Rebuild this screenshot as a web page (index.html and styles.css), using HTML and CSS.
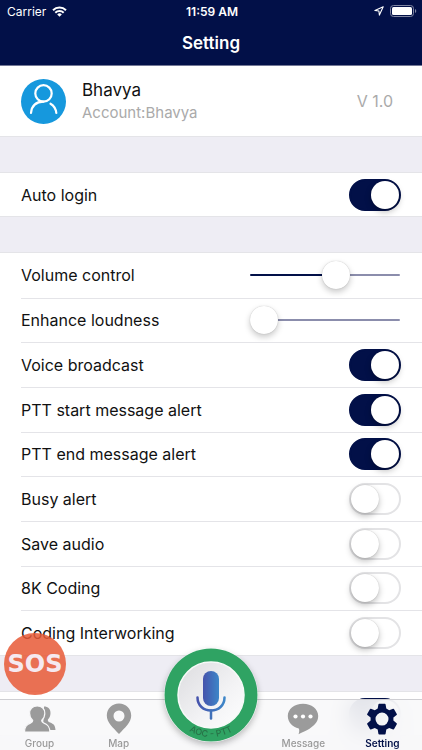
FILE: index.html
```html
<!DOCTYPE html>
<html lang="en">
<head>
<meta charset="utf-8">
<meta name="viewport" content="width=device-width, initial-scale=1">
<title>Setting</title>
<link rel="stylesheet" href="styles.css">
</head>
<body>
<div class="app">
  <header class="header">
    <div class="status">
      <div class="status-left">
        <span>Carrier</span>
        <svg width="15" height="11" viewBox="0 0 15 11" fill="none" stroke="#fff" stroke-width="2" aria-hidden="true">
          <path d="M1 4.2a9.3 9.3 0 0 1 13 0"/>
          <path d="M3.3 6.8a6 6 0 0 1 8.4 0"/>
          <path d="M7.5 10.8 5.2 8.5a3.2 3.2 0 0 1 4.6 0Z" fill="#fff" stroke="none"/>
        </svg>
      </div>
      <span class="clock">11:59 AM</span>
      <div class="status-right">
        <svg width="10" height="10" viewBox="0 0 10 10" fill="none" stroke="#fff" stroke-width="1.1" stroke-linejoin="round" aria-hidden="true">
          <path d="M9.2.8.9 4.5l4 .5.5 4.1Z"/>
        </svg>
        <svg width="27" height="12" viewBox="0 0 27 12" aria-hidden="true">
          <rect x=".5" y=".5" width="23" height="11" rx="3" fill="none" stroke="#8086a3"/>
          <rect x="2" y="2" width="20" height="8" rx="1.5" fill="#fff"/>
          <path d="M25 4v4a2.2 2.2 0 0 0 0-4Z" fill="#8086a3"/>
        </svg>
      </div>
    </div>
    <h1 class="title">Setting</h1>
  </header>

  <main class="content">
    <section class="profile">
      <svg class="avatar" width="45" height="45" viewBox="0 0 45 45" aria-hidden="true">
        <circle cx="22.5" cy="22.5" r="22.5" fill="#1698dd"/>
        <g fill="none" stroke="#fff" stroke-width="2.2" stroke-linecap="round">
          <circle cx="22.5" cy="14.4" r="8.2"/>
          <path d="M10 34c.6-6.500 4.500-11.300 12.500-11.400"/>
          <path d="M29.500 24.700c3.500 2 5.400 5.300 5.800 9.300"/>
        </g>
      </svg>
      <div class="identity">
        <h2 class="name">Bhavya</h2>
        <p class="account">Account:Bhavya</p>
      </div>
      <span class="version">V 1.0</span>
    </section>

    <section class="group">
      <div class="row"><label for="auto">Auto login</label><input class="switch" id="auto" type="checkbox" checked></div>
    </section>

    <section class="group options">
      <div class="row"><label for="volume">Volume control</label><input class="slider" id="volume" type="range" min="0" max="100" value="59" style="--fill:59%"></div>
      <div class="row"><label for="loud">Enhance loudness</label><input class="slider" id="loud" type="range" min="0" max="100" value="0" style="--fill:0%"></div>
      <div class="row"><label for="voice">Voice broadcast</label><input class="switch" id="voice" type="checkbox" checked></div>
      <div class="row"><label for="start">PTT start message alert</label><input class="switch" id="start" type="checkbox" checked></div>
      <div class="row"><label for="end">PTT end message alert</label><input class="switch" id="end" type="checkbox" checked></div>
      <div class="row"><label for="busy">Busy alert</label><input class="switch" id="busy" type="checkbox"></div>
      <div class="row"><label for="save">Save audio</label><input class="switch" id="save" type="checkbox"></div>
      <div class="row"><label for="coding">8K Coding</label><input class="switch" id="coding" type="checkbox"></div>
      <div class="row"><label for="inter">Coding Interworking</label><input class="switch" id="inter" type="checkbox"></div>
    </section>

    <section class="group">
      <div class="row row-end"><input class="switch" type="checkbox" checked aria-label="Option"></div>
    </section>
  </main>

  <nav class="tabs">
    <a class="tab" href="#group">
      <svg width="32" height="32" viewBox="0 0 32 32" fill="#9b9b9b" aria-hidden="true">
        <path d="M20 3.500c4.200 0 6.500 2.600 6.500 6.500 0 2.800-1 5-2.600 6.500-.3 1.500.3 2.200 2.200 3 3.600 1.400 5.200 3 5.400 7.500H19Z"/>
        <path d="M13.200 3c4.800 0 7.600 2.900 7.600 7.200 0 3-1.100 5.400-3 7-.4 1.400.2 2 2.200 2.900 3.900 1.600 5.800 3.500 5.900 8.900H.5c.1-5.400 2-7.300 5.900-8.900 2-.9 2.600-1.500 2.200-2.900-1.900-1.600-3-4-3-7C5.600 5.900 8.400 3 13.200 3Z" stroke="#f8f8f9" stroke-width="1.200"/>
      </svg>
      <span>Group</span>
    </a>
    <a class="tab" href="#map">
      <svg width="26" height="32" viewBox="0 0 26 32" fill="#9b9b9b" fill-rule="evenodd" aria-hidden="true">
        <path d="M13 .5C6 .5 .8 5.800.8 12.500.8 19.500 7 24.500 13 31c6-6.500 12.200-11.500 12.200-18.500C25.200 5.800 20 .5 13 .5Zm0 7a5.500 5.500 0 1 1 0 11 5.500 5.500 0 0 1 0-11Z"/>
      </svg>
      <span>Map</span>
    </a>
    <div class="talk-slot">
      <button class="talk" type="button" aria-label="Push to talk">
        <svg width="94" height="94" viewBox="0 0 94 94">
          <defs>
            <linearGradient id="face" x1="0" y1="0" x2="1" y2="1">
              <stop offset="0" stop-color="#dcdcdf"/><stop offset=".6" stop-color="#f3f3f5"/><stop offset="1" stop-color="#fff"/>
            </linearGradient>
            <linearGradient id="mic" x1="0" y1="0" x2="1" y2="0">
              <stop offset="0" stop-color="#4653ac"/><stop offset="1" stop-color="#3d86c8"/>
            </linearGradient>
            <path id="arc" d="M5 47a42 42 0 0 0 84 0"/>
          </defs>
          <circle cx="47" cy="47" r="46.500" fill="#2fa363"/>
          <circle cx="47" cy="47" r="33" fill="url(#face)" stroke="#f7faf8" stroke-width="1.500"/>
          <rect x="39" y="23" width="16" height="35" rx="8" fill="url(#mic)"/>
          <path d="M33.500 49.500c0 8 6 13 13.500 13s13.500-5 13.500-13" fill="none" stroke="url(#mic)" stroke-width="2.500" stroke-linecap="round"/>
          <path d="M47 62.500v8" stroke="#4171b9" stroke-width="2.500" stroke-linecap="round"/>
          <text class="brand" text-anchor="middle"><textPath href="#arc" startOffset="50%">AOC - PTT</textPath></text>
        </svg>
      </button>
    </div>
    <a class="tab" href="#message">
      <svg width="32" height="32" viewBox="0 0 32 32" aria-hidden="true">
        <path d="M16 .8c8.600 0 15.200 5.200 15.200 12.300 0 6.200-4.400 9.800-8.700 12.600-3.500 2.300-7 3.200-11 5.600.9-2.200 1-4.400.3-5.800C5.400 24.200.8 19.300.8 13.100.8 6 7.400.8 16 .8Z" fill="#9b9b9b"/>
        <g fill="#fff"><circle cx="8.500" cy="13.500" r="2.100"/><circle cx="16" cy="13.500" r="2.100"/><circle cx="23.500" cy="13.500" r="2.100"/></g>
      </svg>
      <span>Message</span>
    </a>
    <a class="tab active" href="#setting" aria-current="page">
      <svg width="32" height="32" viewBox="0 0 32 32" fill="#021048" fill-rule="evenodd" aria-hidden="true">
        <path d="M12.400 1.500Q12.500.8 13.200.8h5.600q.7 0 .8.700l.7 4.100 2.900 1.700 3.900-1.500q.7-.2 1 .4l2.700 4.700q.4.600-.2 1.100l-3.200 2.600v3l3.200 2.600q.6.500.2 1.100l-2.700 4.700q-.3.600-1 .4l-3.900-1.500-2.900 1.700-.7 4.100q-.1.700-.8.700h-5.600q-.7 0-.8-.7l-.7-4.100-2.900-1.700-3.900 1.500q-.7.200-1-.4l-2.700-4.700q-.4-.6.200-1.100l3.200-2.600v-3l-3.200-2.600q-.6-.5-.2-1.100l2.700-4.700q.3-.6 1-.4l3.900 1.500 2.900-1.700ZM16 9.600a6.500 6.500 0 1 0 0 13 6.500 6.500 0 0 0 0-13Z"/>
      </svg>
      <span>Setting</span>
    </a>
  </nav>

  <button class="sos" type="button">SOS</button>
</div>
</body>
</html>
```
FILE: styles.css
```css
* {
  box-sizing: border-box;
}

:root {
  --navy: #021048;
  --band: #eeedf4;
  --line: #e4e4e8;
}

body {
  margin: 0;
  font-family: Inter, "Liberation Sans", sans-serif;
  font-size: 16px;
  color: #111;
  background: var(--band);
}

h1, h2, p {
  margin: 0;
}

button {
  border: 0;
  padding: 0;
  font: inherit;
  cursor: pointer;
}

.app {
  position: relative;
  display: flex;
  flex-direction: column;
  height: 100vh;
  overflow: hidden;
}

.header {
  flex: none;
  color: #fff;
  background: var(--navy);
  border-bottom: 1px solid #737896;
}

.status {
  display: grid;
  grid-template-columns: 1fr auto 1fr;
  align-items: center;
  height: 22px;
  padding: 0 5px 0 7px;
  font-size: 12px;
}

.status-left,
.status-right {
  display: flex;
  align-items: center;
  gap: 6px;
}

.status-right {
  justify-content: flex-end;
}

.clock {
  font-weight: 600;
}

.title {
  font-size: 17px;
  line-height: 43px;
  font-weight: 600;
  text-align: center;
}

.content {
  flex: 1;
  min-height: 0;
  display: flex;
  flex-direction: column;
  gap: 35px;
  overflow-y: auto;
  scrollbar-width: none;
}

.profile {
  flex: none;
  display: flex;
  align-items: center;
  gap: 16px;
  height: 71px;
  padding: 0 29px 0 21px;
  background: #fff;
  border-bottom: 1px solid var(--line);
}

.identity {
  flex: 1;
}

.name {
  font-size: 17px;
  line-height: 24px;
  font-weight: 400;
}

.account {
  font-size: 15px;
  line-height: 22px;
  color: #aaa;
}

.version {
  font-size: 16px;
  color: #aaa;
}

.group {
  flex: none;
  background: #fff;
  border-top: 1px solid var(--line);
  border-bottom: 1px solid var(--line);
}

.options {
  display: grid;
  grid-auto-rows: 1fr;
  min-height: 404px;
}

.row {
  display: flex;
  align-items: center;
  justify-content: space-between;
  min-height: 43px;
  margin-left: 21px;
  padding-right: 21px;
}

.row + .row {
  border-top: 1px solid var(--line);
}

.row-end {
  justify-content: flex-end;
}

.switch {
  appearance: none;
  display: flex;
  width: 52px;
  height: 32px;
  margin: 0;
  padding: 2px;
  border: 2px solid #e3e3e5;
  border-radius: 16px;
  background: #fff;
}

.switch::before {
  content: "";
  width: 28px;
  height: 28px;
  margin: -2px;
  border-radius: 50%;
  background: #fff;
  box-shadow: 0 3px 6px rgb(0 0 0 / 25%), 0 0 1px rgb(0 0 0 / 25%);
}

.switch:checked {
  justify-content: flex-end;
  border-color: var(--navy);
  background: var(--navy);
}

.slider {
  appearance: none;
  width: 150px;
  height: 28px;
  margin: 0 1px;
  background: transparent;
}

.slider::-webkit-slider-runnable-track {
  height: 2px;
  border-radius: 1px;
  background: linear-gradient(to right, var(--navy) var(--fill), #8b8dac var(--fill));
}

.slider::-webkit-slider-thumb {
  appearance: none;
  width: 28px;
  height: 28px;
  margin-top: -13px;
  border-radius: 50%;
  background: #fff;
  box-shadow: 0 3px 6px rgb(0 0 0 / 22%), 0 0 1px rgb(0 0 0 / 25%);
}

.tabs {
  position: absolute;
  inset: auto 0 0;
  display: grid;
  grid-template-columns: 3fr 3fr 4fr 3fr 3fr;
  height: 51px;
  border-top: 1px solid #cfcfd3;
  background: rgb(248 248 249 / 90%);
  backdrop-filter: blur(12px);
}

.tab {
  display: flex;
  flex-direction: column;
  align-items: center;
  justify-content: space-between;
  padding: 3px 0 1px;
  color: #999;
  font-size: 10px;
  line-height: 12px;
  font-weight: 500;
  text-decoration: none;
}

.active {
  color: var(--navy);
  font-weight: 600;
}

.talk-slot {
  position: relative;
}

.talk {
  position: absolute;
  left: 50%;
  bottom: 8px;
  width: 94px;
  height: 94px;
  margin-left: -47px;
  border-radius: 50%;
  background: none;
  box-shadow: 0 3px 6px rgb(0 0 0 / 25%);
}

.talk svg {
  display: block;
}

.brand {
  font-size: 9px;
  font-weight: 500;
  fill: #287348;
}

.sos {
  position: absolute;
  left: 4px;
  bottom: 55px;
  width: 62px;
  height: 62px;
  border-radius: 50%;
  color: #f5e9f0;
  background: rgb(231 89 54 / 85%);
  font-family: "DejaVu Sans", sans-serif;
  font-size: 24px;
  font-weight: 700;
}
```
